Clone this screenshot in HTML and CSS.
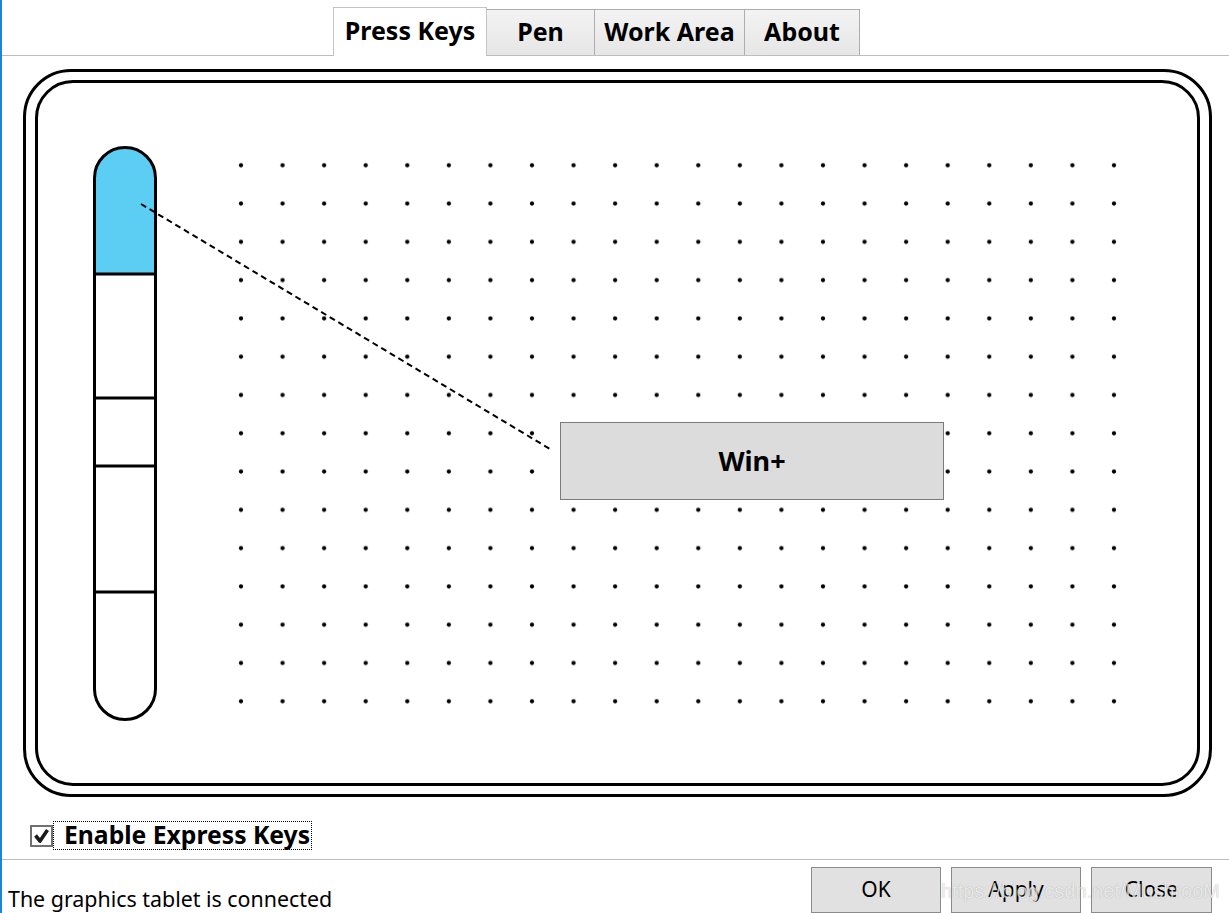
FILE: index.html
```html
<!DOCTYPE html>
<html>
<head>
<meta charset="utf-8">
<title>Tablet Settings</title>
<link rel="stylesheet" href="styles.css">
</head>
<body>
<div class="window">
  <div class="tabbar">
    <div class="tab tab-active tab-press">Press Keys</div>
    <div class="tab tab-pen">Pen</div>
    <div class="tab tab-work">Work Area</div>
    <div class="tab tab-about">About</div>
  </div>
  <div class="stage">
    <div class="frame-outer">
      <div class="frame-inner">
        <svg class="diagram" width="1159" height="700" viewBox="38 83 1159 700" xmlns="http://www.w3.org/2000/svg">
          <defs>
            <pattern id="dots" patternUnits="userSpaceOnUse" x="220.214" y="146.157" width="41.571" height="38.286">
              <circle cx="20.786" cy="19.143" r="2.1" fill="#000"/>
            </pattern>
          </defs>
          <rect x="220.214" y="146.157" width="914.57" height="574.29" fill="url(#dots)"/>
          <path d="M94.5,274 V178 A30.5,30.5 0 0 1 155.5,178 V274 Z" fill="#5ccef3"/>
          <path d="M94.5,178 A30.5,30.5 0 0 1 155.5,178 V689 A30.5,30.5 0 0 1 94.5,689 Z" fill="none" stroke="#000" stroke-width="3"/>
          <g stroke="#000" stroke-width="3">
            <line x1="94.5" y1="274" x2="155.5" y2="274"/>
            <line x1="94.5" y1="398" x2="155.5" y2="398"/>
            <line x1="94.5" y1="466" x2="155.5" y2="466"/>
            <line x1="94.5" y1="592" x2="155.5" y2="592"/>
          </g>
          <line x1="141" y1="204" x2="550" y2="449" stroke="#000" stroke-width="2" stroke-dasharray="6 4"/>
        </svg>
        <div class="keybox">Win+</div>
      </div>
    </div>
  </div>
  <div class="options">
    <span class="checkbox">
      <svg width="23" height="22" viewBox="0 0 23 22" xmlns="http://www.w3.org/2000/svg">
        <rect x="1" y="1" width="21" height="20" fill="#fff" stroke="#707070" stroke-width="2"/>
        <path d="M5.5,10.5 L10,16 L17.5,5" fill="none" stroke="#1a1a1a" stroke-width="3.6" stroke-linejoin="round"/>
      </svg>
    </span>
    <span class="focus-label">Enable Express Keys</span>
  </div>
  <div class="footer">
    <div class="status">The graphics tablet is connected</div>
    <div class="buttons">
      <button class="btn">OK</button>
      <button class="btn">Apply</button>
      <button class="btn btn-close">Close</button>
    </div>
    <div class="watermark">https://blog.csdn.net/MushrooM</div>
  </div>
</div>
</body>
</html>
```
FILE: styles.css
```css
html, body {
  margin: 0;
  padding: 0;
  background: #fff;
}
body {
  font-family: "Noto Sans", "Open Sans", sans-serif;
  color: #000;
}
.window {
  height: 913px;
  box-sizing: border-box;
  border-left: 2px solid #1b86d8;
  display: flex;
  flex-direction: column;
  overflow: hidden;
}
.window > * {
  flex-shrink: 0;
}
.tabbar {
  height: 56px;
  box-sizing: border-box;
  border-bottom: 1px solid #bdbdbd;
  display: flex;
  align-items: flex-end;
  padding-left: 331px;
}
.tab {
  height: 46px;
  box-sizing: border-box;
  border: 1px solid #adadad;
  border-bottom: none;
  background: linear-gradient(#f3f3f3, #e6e6e6);
  display: flex;
  align-items: center;
  justify-content: center;
  font-weight: 700;
  font-size: 25px;
  margin-left: -1px;
  padding-bottom: 4px;
}
.tab-active {
  height: 49px;
  margin-bottom: -1px;
  margin-left: 0;
  background: #fff;
  border-color: #c4c4c4;
  position: relative;
  z-index: 1;
  padding-bottom: 4px;
}
.tab-press { width: 154px; }
.tab-pen { width: 109px; margin-left: -1px; }
.tab-work { width: 151px; }
.tab-about { width: 116px; }
.stage {
  padding: 13px 0 0 21px;
}
.frame-outer {
  width: 1189px;
  height: 728px;
  box-sizing: border-box;
  border: 3px solid #000;
  border-radius: 48px;
  padding: 8px 9px;
}
.frame-inner {
  height: 100%;
  box-sizing: border-box;
  border: 3px solid #000;
  border-radius: 38px;
  position: relative;
}
.diagram {
  position: absolute;
  left: 0;
  top: 0;
  display: block;
}
.keybox {
  position: absolute;
  left: 522px;
  top: 339px;
  width: 384px;
  height: 78px;
  box-sizing: border-box;
  background: #dcdcdc;
  border: 1px solid #7a7a7a;
  display: flex;
  align-items: center;
  justify-content: center;
  font-weight: 700;
  font-size: 27px;
  padding-bottom: 2px;
}
.options {
  margin-top: 24px;
  height: 29px;
  padding-left: 28px;
  display: flex;
  align-items: center;
}
.checkbox {
  width: 23px;
  height: 22px;
  display: block;
}
.checkbox svg {
  display: block;
}
.focus-label {
  height: 29px;
  box-sizing: border-box;
  border: 1px dotted #000;
  padding: 0 1px 2px 10px;
  display: flex;
  align-items: center;
  font-weight: 700;
  font-size: 24.7px;
}
.footer {
  margin-top: 9px;
  border-top: 1px solid #bdbdbd;
  flex: 1 1 auto;
  min-height: 0;
  position: relative;
  display: flex;
  justify-content: space-between;
  align-items: flex-start;
  padding: 7px 17px 0 6px;
}
.status {
  margin-top: 17px;
  font-size: 21.4px;
  line-height: 30px;
}
.buttons {
  display: flex;
  gap: 10px;
}
.btn {
  width: 130px;
  height: 46px;
  box-sizing: border-box;
  background: #e1e1e1;
  border: 1px solid #8a8a8a;
  font-family: "Noto Sans", "Open Sans", sans-serif;
  font-size: 21px;
  color: #000;
  padding: 0 0 2px 0;
  margin: 0;
}
.btn-close {
  width: 121px;
}
.watermark {
  position: absolute;
  right: 9px;
  top: 20px;
  font-family: "Liberation Sans", sans-serif;
  font-size: 20px;
  color: rgba(255, 255, 255, 0.75);
  text-shadow: 0 0 1px rgba(0, 0, 0, 0.3);
  pointer-events: none;
}
```
